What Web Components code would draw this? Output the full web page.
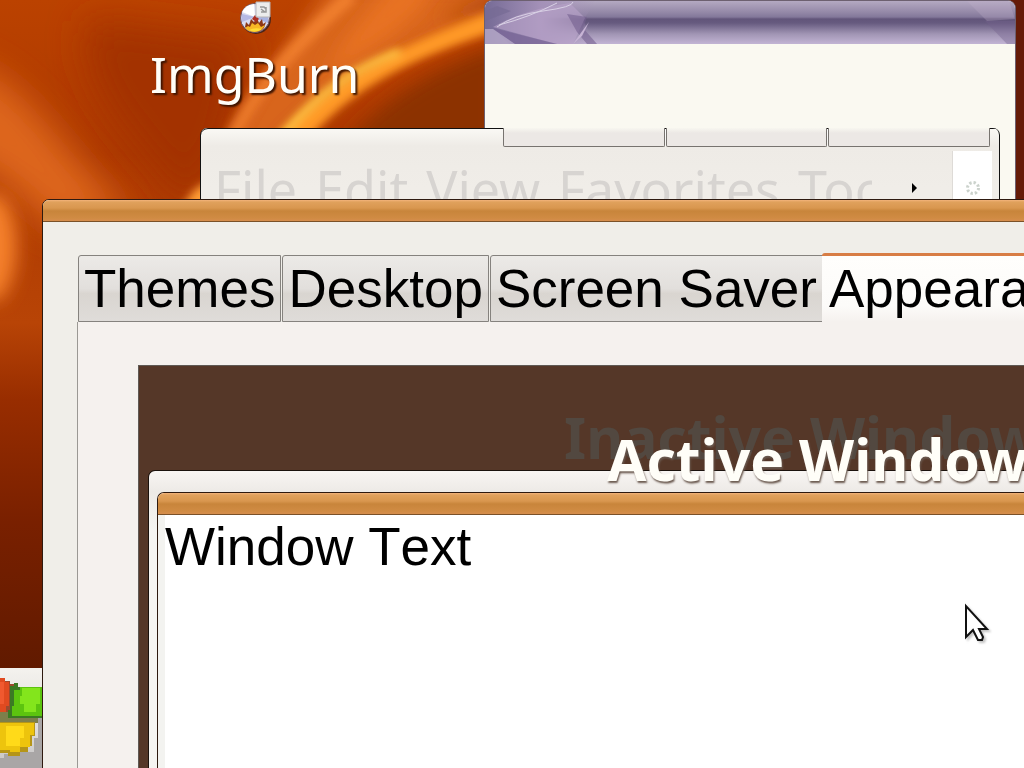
<!DOCTYPE html>
<html lang="en">
<head>
<meta charset="utf-8">
<title>Desktop</title>
<style>
  html, body {
    height: 100%;
    margin: 0;
    overflow: hidden;
    background: #7a2000;
  }
</style>
</head>
<body>
<xp-desktop>
  <xp-wallpaper slot="wallpaper"></xp-wallpaper>
  <xp-shortcut>ImgBurn</xp-shortcut>
  <xp-taskbar></xp-taskbar>
  <xp-media-window></xp-media-window>
  <xp-explorer-window>
    <xp-menu-item>File</xp-menu-item>
    <xp-menu-item>Edit</xp-menu-item>
    <xp-menu-item>View</xp-menu-item>
    <xp-menu-item>Favorites</xp-menu-item>
    <xp-menu-item>Tools</xp-menu-item>
  </xp-explorer-window>
  <xp-dialog>
    <xp-tab slot="tabs">Themes</xp-tab>
    <xp-tab slot="tabs">Desktop</xp-tab>
    <xp-tab slot="tabs">Screen Saver</xp-tab>
    <xp-tab slot="tabs" selected>Appearance</xp-tab>
    <xp-preview>
      <span slot="inactive">Inactive Window</span>
      <span slot="active">Active Window</span>
      Window Text
    </xp-preview>
  </xp-dialog>
  <xp-cursor></xp-cursor>
</xp-desktop>

<script>
function define(name, html, setup) {
  const template = document.createElement('template');
  template.innerHTML = html;

  customElements.define(name, class extends HTMLElement {
    constructor(){
      super();
      this.attachShadow({mode: 'open'});
      this.shadowRoot.appendChild(template.content.cloneNode(true));
    }

    connectedCallback(){
      if(setup) setup(this);
    }
  });
}

define('xp-desktop', `
  <style>
    :host{
      display: block;
      position: relative;
      height: 100vh;
      overflow: hidden;
      font-family: "Noto Sans", sans-serif;
      font-size: 52px;
      --ui-font: "Liberation Sans", Arial, sans-serif;
      --caption: linear-gradient(#f3b47c 0, #e0a15c 2px, #d9974f 8px, #c8853b 11px, #d08b43 18px, #d68d4d 100%);
    }
  </style>
  <slot name="wallpaper"></slot>
  <slot></slot>
`);

define('xp-wallpaper', `
  <style>
    :host{
      position: absolute;
      inset: 0;
    }
    svg{
      display: block;
      width: 100%;
      height: 100%;
    }
  </style>
  <svg viewBox="0 0 1024 768" preserveAspectRatio="xMinYMin slice" aria-hidden="true">
    <defs>
      <linearGradient id="base" x1="0" y1="0" x2="0" y2="1">
        <stop offset="0" stop-color="#bb4200"/>
        <stop offset=".2" stop-color="#ac3800"/>
        <stop offset=".42" stop-color="#b84406"/>
        <stop offset=".52" stop-color="#982d00"/>
        <stop offset=".68" stop-color="#792000"/>
        <stop offset="1" stop-color="#501600"/>
      </linearGradient>
      <filter id="b4" x="-50%" y="-50%" width="200%" height="200%"><feGaussianBlur stdDeviation="4"/></filter>
      <filter id="b9" x="-50%" y="-50%" width="200%" height="200%"><feGaussianBlur stdDeviation="9"/></filter>
      <filter id="b18" x="-50%" y="-50%" width="200%" height="200%"><feGaussianBlur stdDeviation="18"/></filter>
    </defs>
    <rect width="1024" height="768" fill="url(#base)"/>
    <path d="M-40 60C30 80 60 150 130 215L60 230C20 200 0 170-40 160Z" fill="#de661a" filter="url(#b18)"/>
    <path d="M90 20C70 90 150 150 190 210L230 130 250 40Z" fill="#a33300" filter="url(#b18)"/>
    <path d="M-60 195H0C22 215 22 275 0 300H-60Z" fill="#f58029" filter="url(#b9)"/>
    <path d="M340 150C380 100 430 70 500 45V150Z" fill="#8c3000" filter="url(#b9)"/>
    <path d="M225 150C265 70 300 30 330-15L500-15 485 20C400 50 330 80 270 150Z" fill="#d8651b" filter="url(#b9)"/>
    <path d="M325 75C345 35 370 10 395-20L440-20C420 20 380 45 325 75Z" fill="#e87222" filter="url(#b9)"/>
    <path d="M440 20C460 5 480-5 520-15V12Z" fill="#b94e10" filter="url(#b9)"/>
    <path d="M228 145C260 80 300 40 352-5" fill="none" stroke="#fb8a35" stroke-width="14" opacity=".7" filter="url(#b4)"/>
    <path d="M265 150C330 75 400 45 500 8L500 30C420 55 350 85 300 150Z" fill="#ff9928" filter="url(#b4)"/>
    <path d="M275 145C315 95 350 70 400 52" fill="none" stroke="#ffc545" stroke-width="8" filter="url(#b4)"/>
    <path d="M180 215C188 195 195 185 215 180V215Z" fill="#ff9c34" filter="url(#b4)"/>
    <path d="M1008 0H1024V205H1008Z" fill="#651b08"/>
  </svg>
`);

define('xp-shortcut', `
  <style>
    :host{
      position: absolute;
      left: 150px;
      top: 0;
    }
    a{
      display: flex;
      flex-direction: column;
      align-items: center;
      color: #fffef8;
      font-size: 50px;
      line-height: 76px;
      text-decoration: none;
      text-shadow: 2px 2px 2px #3c1400;
    }
    svg{
      display: block;
    }
  </style>
  <a href="#imgburn">
    <svg width="34" height="36" viewBox="0 0 34 36" aria-hidden="true">
      <circle cx="18" cy="19" r="15" fill="#4d2517"/>
      <circle cx="17" cy="18" r="14.500" fill="#d9dbef" stroke="#6c5260"/>
      <path d="M17 17L4 12A14 14 0 0 1 16 4Z" fill="#fff"/>
      <path d="M17 17L4 22A14 14 0 0 1 4 14Z" fill="#b5b9e4"/>
      <path d="M17 18L30 16V23Z" fill="#a9b3e2"/>
      <path d="M7 27L8 22 11 25 13 19 16 22 19 18 21 23 24 19 25 24 28 22 26 28C21 34 12 33 7 27Z" fill="#8d3815"/>
      <path d="M7 28L10 26 12 27 14 23 17 25 20 23 23 27 27 25C24 33 12 34 7 28Z" fill="#f7b725"/>
      <path d="M11 30Q17 27 24 29Q17 34 11 30Z" fill="#ffdc35"/>
      <path d="M14 19L17 15 21 19 18 22Z" fill="#ae3025"/>
      <path d="M18 2H32V17H18Z" fill="#ececec" stroke="#b8b5b7"/>
      <path d="M22 7H26L28 9V7M28 7V12H23M23 9L27 12" fill="none" stroke="#989898" stroke-width="1.500"/>
    </svg>
    <slot></slot>
  </a>
`);

define('xp-taskbar', `
  <style>
    :host{
      position: absolute;
      left: 0;
      right: 0;
      bottom: 0;
      height: 100px;
      background: linear-gradient(#f4f2ee, #dedcda 60%, #c5c3c3);
    }
    button{
      display: block;
      border: 0;
      padding: 0;
      background: none;
    }
    svg{
      display: block;
    }
  </style>
  <button aria-label="Start">
    <svg width="44" height="100" viewBox="0 0 44 100" aria-hidden="true" shape-rendering="crispEdges">
      <path d="M4 86H12V80H24V84H34V70H38V50H42V100H0V90H4Z" fill="#a9a6a6"/>
      <path d="M0 10H5V13H10V16H14V49H0Z" fill="#9c4a2e"/>
      <path d="M0 10H5V14H9V38H6V44H0Z" fill="#e04a20"/>
      <path d="M0 14H4V36H0Z" fill="#f0592f"/>
      <path d="M10 18H14V15H18V19H42V50H8V42H10Z" fill="#3b7a24"/>
      <path d="M14 22H20V19H42V48H12V38H14Z" fill="#5cc40f"/>
      <path d="M22 20H40V36H36V44H24V36H20V28H22Z" fill="#83e51c"/>
      <path d="M0 44H8V50H38V55H0Z" fill="#7d7f4b"/>
      <path d="M0 54H35V68H32V78H28V84H20V88H8V85H0Z" fill="#b59518"/>
      <path d="M0 55H34V67H30V79H20V84H10V82H0Z" fill="#edc40d"/>
      <path d="M6 58H24V70H20V78H6Z" fill="#ffda19"/>
    </svg>
  </button>
`);

define('xp-media-window', `
  <style>
    :host{
      position: absolute;
      left: 484px;
      right: 8px;
      top: 0;
      height: 260px;
      box-sizing: border-box;
      border: 1px solid #6d6070;
      border-radius: 8px 8px 0 0;
      background: #faf9f1;
      overflow: hidden;
    }
    header{
      display: flex;
      justify-content: space-between;
      background: linear-gradient(#b4a9c2 0, #9589a8 11px, #83789a 16px, #62557a 18px, #665a7f 22px, #a195b4 33px, #c2b4d4 43px);
    }
    svg{
      display: block;
    }
  </style>
  <header>
    <svg width="170" height="43" viewBox="0 0 170 43" aria-hidden="true">
      <defs>
        <linearGradient id="f" x1="0" x2="1"><stop offset="0" stop-color="#766b96"/><stop offset=".5" stop-color="#a491b8"/><stop offset="1" stop-color="#a491b8" stop-opacity="0"/></linearGradient>
      </defs>
      <path d="M0 0H110L98 20 112 43H0Z" fill="url(#f)"/>
      <path d="M8 26Q40 8 85 2L100 17 88 43H72Z" fill="#b9a4c9" opacity=".6"/>
      <path d="M8 27L72 43H24Z" fill="#796797" opacity=".8"/>
      <path d="M8 28L30 43H0V28Z" fill="#b6aac9" opacity=".8"/>
      <path d="M0 10L12 5 26 10 0 20Z" fill="#766b94" opacity=".7"/>
      <path d="M82 13L102 16 98 27 112 43H102L92 31Z" fill="#75608f" opacity=".6"/>
      <path d="M98 29L104 21 97 35 88 43Z" fill="#c7b4d5"/>
      <path d="M12 26Q28 14 58 10T88 1M14 24Q45 16 72 2" fill="none" stroke="#d8d0e4"/>
    </svg>
    <svg width="60" height="43" viewBox="0 0 60 43" aria-hidden="true">
      <path d="M12 0H54L60 18 32 20Z" fill="#c1aecb" opacity=".3"/>
      <path d="M30 20H60V43H52Z" fill="#73618b" opacity=".4"/>
    </svg>
  </header>
`);

define('xp-menu-item', `
  <style>
    :host{
      display: block;
    }
    button{
      display: block;
      border: 0;
      padding: 0;
      background: none;
      color: #d7d4d1;
      font: inherit;
      line-height: 76px;
      white-space: nowrap;
    }
  </style>
  <button><slot></slot></button>
`);

define('xp-explorer-window', `
  <style>
    :host{
      position: absolute;
      left: 200px;
      right: 24px;
      top: 128px;
      height: 160px;
      box-sizing: border-box;
      border: solid #111;
      border-width: 0 1px;
      border-radius: 7px 7px 0 0;
      background: linear-gradient(#faf9f5, #eeebe6 18px, #f0ede8 60px);
      overflow: hidden;
    }
    .top{
      display: flex;
      height: 19px;
    }
    .title{
      width: 302px;
      box-sizing: border-box;
      border-top: 1px solid #111;
      border-radius: 7px 0 0 0;
    }
    .well{
      flex: 1;
      box-sizing: border-box;
      border: 1px solid #77736f;
      border-top: 0;
      border-radius: 0 0 2px 2px;
      background: linear-gradient(#f8f7f0, #ece8e5 5px);
    }
    .gap{
      width: 1px;
      background: linear-gradient(#111 1px, #fff 1px, #f3f1ed);
    }
    .end{
      width: 9px;
      border-top: 1px solid #111;
    }
    .bar{
      display: flex;
      padding: 4px 7px 0 13px;
    }
    nav{
      display: flex;
      flex: 1;
      gap: 18px;
      min-width: 0;
      overflow: hidden;
    }
    .more{
      display: flex;
      align-items: center;
      width: 80px;
      height: 74px;
      border: 0;
      padding: 0 0 0 40px;
      background: none;
    }
    .busy{
      display: flex;
      justify-content: center;
      width: 39px;
      height: 80px;
      border-left: 1px solid #dedbd7;
      background: #fff;
    }
  </style>
  <div class="top">
    <div class="title"></div>
    <div class="well"></div>
    <div class="gap"></div>
    <div class="well"></div>
    <div class="gap"></div>
    <div class="well"></div>
    <div class="end"></div>
  </div>
  <div class="bar">
    <nav><slot></slot></nav>
    <button class="more" aria-label="More">
      <svg width="6" height="10" viewBox="0 0 6 10"><path d="M0 0L5 5 0 10Z"/></svg>
    </button>
    <div class="busy">
      <svg width="14" height="74" viewBox="0 0 14 74" aria-hidden="true">
        <circle cx="7" cy="37" r="5.500" fill="none" stroke="#cbd2cc" stroke-width="3" stroke-dasharray="2.300 2"/>
      </svg>
    </div>
  </div>
`);

define('xp-dialog', `
  <style>
    :host{
      position: absolute;
      left: 42px;
      right: -20px;
      top: 199px;
      bottom: -20px;
      box-sizing: border-box;
      display: flex;
      flex-direction: column;
      border: 1px solid #2e1a10;
      border-radius: 7px 7px 0 0;
      background: #f0eee9;
      overflow: hidden;
    }
    header{
      height: 21px;
      border-bottom: 1px solid #7b5128;
      background: var(--caption);
    }
    .body{
      display: flex;
      flex: 1;
      flex-direction: column;
      padding: 31px 0 0 34px;
    }
    .tabs{
      display: flex;
      align-items: flex-end;
      gap: 1px;
      padding-left: 1px;
    }
    main{
      display: flex;
      flex: 1;
      border: solid #9b9894;
      border-width: 0 0 0 1px;
      padding: 43px 0 0 60px;
      background: #f5f1ee;
    }
  </style>
  <header></header>
  <div class="body">
    <div class="tabs" role="tablist"><slot name="tabs"></slot></div>
    <main><slot></slot></main>
  </div>
`);

define('xp-tab', `
  <style>
    :host{
      display: block;
      flex: none;
    }
    button{
      display: block;
      box-sizing: border-box;
      height: 67px;
      border: 1px solid #85827e;
      border-radius: 3px 0 0 0;
      padding: 0 5px;
      background: linear-gradient(#eceae7, #e2dfdc 50%, #d9d5d0 58%, #dfdcd9);
      color: #000;
      font: 53px/65px var(--ui-font);
      white-space: nowrap;
    }
    :host([selected]){
      margin-left: -2px;
    }
    :host([selected]) button{
      height: 69px;
      border: 0;
      border-top: 3px solid #d87d45;
      padding: 0 7px 4px;
      background: linear-gradient(#fffefc, #fcfbf9 50px, #f5f1ee);
    }
  </style>
  <button role="tab"><slot></slot></button>
`, (el) => {
  el.shadowRoot.querySelector('button').setAttribute('aria-selected', el.hasAttribute('selected'));
});

define('xp-preview', `
  <style>
    :host{
      position: relative;
      display: flex;
      flex: 1;
      box-sizing: border-box;
      border: solid #5f5954;
      border-width: 1px 0 0 1px;
      padding: 104px 0 0 9px;
      background: #553728;
      overflow: hidden;
    }
    .caption{
      position: absolute;
      font-size: 57px;
      font-weight: bold;
      line-height: 76px;
      white-space: nowrap;
    }
    .inactive{
      left: 425px;
      top: 33px;
      color: #524840;
    }
    .active{
      left: 468px;
      top: 55px;
      color: #fffef8;
      text-shadow: 1px 2px 2px #6b5a50;
    }
    .outer{
      display: flex;
      flex: 1;
      border: solid #1b120d;
      border-width: 1px 0 0 1px;
      border-radius: 7px 0 0 0;
      padding: 21px 0 0 8px;
      background: linear-gradient(#f8f5f3, #edeae6 21px, #f5f4f1 60px);
      z-index: 0;
    }
    .inner{
      display: flex;
      flex: 1;
      flex-direction: column;
      border: solid #2d190e;
      border-width: 1px 0 0 1px;
      border-radius: 7px 0 0 0;
      background: #fff;
      overflow: hidden;
    }
    .bar{
      height: 21px;
      border-bottom: 1px solid #7b5128;
      background: var(--caption);
    }
    .text{
      flex: 1;
      border-left: 7px solid #f3f3f0;
      color: #000;
      font: 53px/63px var(--ui-font);
      font-kerning: none;
    }
    .active, .text{
      z-index: 1;
    }
  </style>
  <div class="caption inactive"><slot name="inactive"></slot></div>
  <div class="outer">
    <div class="inner">
      <div class="bar"></div>
      <div class="text"><slot></slot></div>
    </div>
  </div>
  <div class="caption active"><slot name="active"></slot></div>
`);

define('xp-cursor', `
  <style>
    :host{
      position: absolute;
      left: 964px;
      top: 603px;
      pointer-events: none;
    }
    svg{
      display: block;
      filter: drop-shadow(2px 2px 1px #9999);
    }
  </style>
  <svg width="26" height="42" viewBox="0 0 26 42" aria-hidden="true">
    <path d="M2 3V34L9 27 14 37H18L19 34 15 26H23Z" fill="#fff" stroke="#111" stroke-width="2"/>
  </svg>
`);
</script>
</body>
</html>
